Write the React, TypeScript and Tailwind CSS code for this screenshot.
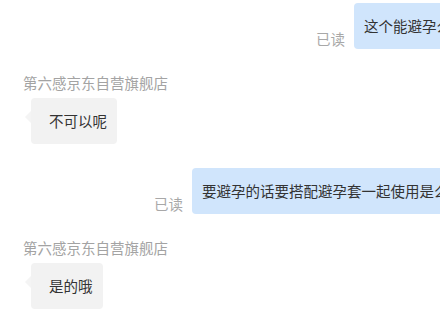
const font = { fontFamily: '"Noto Sans CJK SC", "Liberation Sans", sans-serif' };

function SentMessage({ text, offset }: { text: string; offset: string }) {
  return (
    <div className={`flex items-end gap-[9px] ${offset}`}>
      <span className="text-[14.5px] leading-5 text-[#a8a8a8] whitespace-nowrap">已读</span>
      <div className="rounded-[4px] bg-[#d0e5fc] pl-[10px] pr-3 py-[13px] text-[14.5px] leading-5 text-[#333] whitespace-nowrap">
        {text}
      </div>
    </div>
  );
}

function ReceivedMessage({ name, text }: { name: string; text: string }) {
  return (
    <div className="flex flex-col items-start pl-[23px]">
      <span className="text-[14.5px] leading-5 text-[#a3a3a3] whitespace-nowrap">{name}</span>
      <div className="relative mt-[5px] ml-2 rounded-[4px] bg-[#f2f2f2] pl-[18px] pr-[10px] py-[13px] text-[14.5px] leading-5 text-[#333] whitespace-nowrap">
        <span className="absolute left-[-6px] top-[13px] h-0 w-0 border-y-[6px] border-r-[6px] border-y-transparent border-r-[#f4f4f4]" />
        {text}
      </div>
    </div>
  );
}

export default function App() {
  return (
    <div className="w-[440px] h-[326px] overflow-hidden bg-white" style={font}>
      <div className="flex flex-col pt-[3px]">
        <SentMessage text="这个能避孕么？" offset="pl-[316px]" />
        <div className="mt-6">
          <ReceivedMessage name="第六感京东自营旗舰店" text="不可以呢" />
        </div>
        <div className="mt-6">
          <SentMessage text="要避孕的话要搭配避孕套一起使用是么？" offset="pl-[154px]" />
        </div>
        <div className="mt-6">
          <ReceivedMessage name="第六感京东自营旗舰店" text="是的哦" />
        </div>
      </div>
    </div>
  );
}
